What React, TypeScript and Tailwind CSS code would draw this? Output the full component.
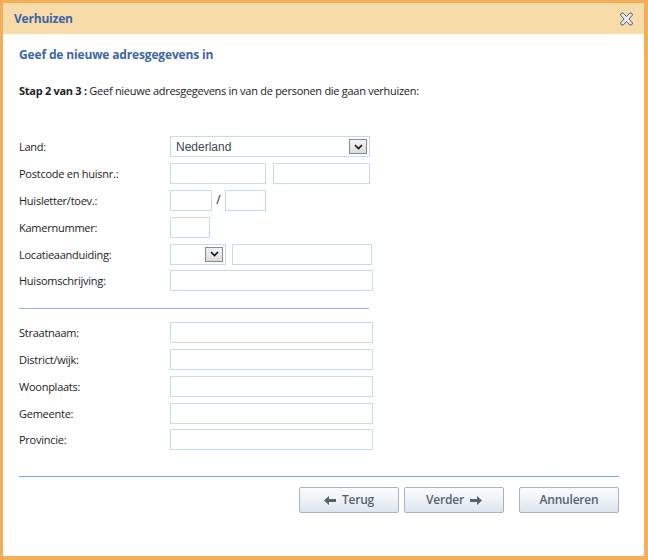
import React from "react";

const font = { fontFamily: '"Open Sans", "Noto Sans", sans-serif' };

function Input({ w }: { w: string }) {
  return <div className={`h-[21px] border border-[#c6daee] bg-white ${w}`} />;
}

function Chevron() {
  return (
    <div className="flex h-[15px] w-[18px] items-center justify-center border border-[#8a8a8a] bg-gradient-to-b from-[#f4f4f4] to-[#dcdcdc]">
      <svg width="9" height="6" viewBox="0 0 9 6">
        <path d="M1 1 L4.5 4.5 L8 1" stroke="#111" strokeWidth="1.6" fill="none" />
      </svg>
    </div>
  );
}

function Row({ label, children, h = "h-[27px]" }: { label: string; children: React.ReactNode; h?: string }) {
  return (
    <div className={`flex items-center ${h}`}>
      <div className="w-[151px] text-[11px] tracking-[-0.25px] text-[#222] leading-none">{label}</div>
      <div className="flex items-center">{children}</div>
    </div>
  );
}

function Btn({ children }: { children: React.ReactNode }) {
  return (
    <div className="flex h-[26px] w-[100px] items-center justify-center gap-[6px] rounded-[2px] border border-[#a9b3bf] bg-gradient-to-b from-[#fbfcfd] via-[#eef2f7] to-[#dde4ee] text-[12px] font-semibold tracking-[-0.2px] text-[#58626e]">
      {children}
    </div>
  );
}

function ArrowLeft() {
  return (
    <svg width="12" height="9" viewBox="0 0 12 9">
      <path d="M0 4.5 L5 0 L5 3 L12 3 L12 6 L5 6 L5 9 Z" fill="#58626e" />
    </svg>
  );
}
function ArrowRight() {
  return (
    <svg width="12" height="9" viewBox="0 0 12 9">
      <path d="M12 4.5 L7 0 L7 3 L0 3 L0 6 L7 6 L7 9 Z" fill="#58626e" />
    </svg>
  );
}

export default function App() {
  return (
    <div style={font} className="h-[560px] w-[648px] border-l-[3px] border-t-[3px] border-r-[4px] border-b-[4px] border-[#f4ae58] bg-white">
      <div className="flex h-[31px] items-center justify-between bg-[#f7dca9] pl-[11px] pr-[10px]">
        <div className="text-[12px] font-bold tracking-[-0.2px] text-[#3b67a6]">Verhuizen</div>
        <svg width="15" height="14" viewBox="0 0 15 14">
          <path
            d="M2 1.5 L4 0.8 L7.5 4.5 L11 0.8 L13 1.5 L13.5 3 L10 7 L13.5 11 L13 12.5 L11 13.2 L7.5 9.5 L4 13.2 L2 12.5 L1.5 11 L5 7 L1.5 3 Z"
            fill="#e8eaee"
            stroke="#5a6070"
            strokeWidth="1"
            strokeLinejoin="round"
          />
        </svg>
      </div>
      <div className="pl-[16px] pr-[25px]">
        <div className="pt-[12px] text-[12px] font-bold tracking-[-0.15px] text-[#3b67a6] leading-[18px]">Geef de nieuwe adresgegevens in</div>
        <div className="pt-[20px] text-[11px] tracking-[-0.28px] text-[#222] leading-[14px]">
          <span className="font-bold">Stap 2 van 3 :</span> Geef nieuwe adresgegevens in van de personen die gaan verhuizen:
        </div>
        <div className="pt-[35px]">
          <Row label="Land:">
            <div className="flex h-[21px] w-[200px] items-center justify-between border border-[#c6daee] pl-[5px] pr-[2px]">
              <span className="text-[12px] text-[#3c4652]" style={{ fontFamily: '"Liberation Sans", Arial, sans-serif' }}>Nederland</span>
              <Chevron />
            </div>
          </Row>
          <Row label="Postcode en huisnr.:">
            <Input w="w-[96px]" />
            <div className="w-[7px]" />
            <Input w="w-[97px]" />
          </Row>
          <Row label="Huisletter/toev.:" h="h-[26px]">
            <Input w="w-[42px]" />
            <div className="w-[13px] text-center text-[12px] text-[#222]">/</div>
            <Input w="w-[41px]" />
          </Row>
          <Row label="Kamernummer:" h="h-[28px]">
            <Input w="w-[40px]" />
          </Row>
          <Row label="Locatieaanduiding:" h="h-[26px]">
            <div className="flex h-[21px] w-[56px] items-center justify-end border border-[#c6daee] pr-[2px]">
              <Chevron />
            </div>
            <div className="w-[6px]" />
            <Input w="w-[140px]" />
          </Row>
          <Row label="Huisomschrijving:">
            <Input w="w-[203px]" />
          </Row>
        </div>
        <div className="mt-[14px] h-px w-[350px] bg-[#98b3d8]" />
        <div className="pt-[10px]">
          <Row label="Straatnaam:"><Input w="w-[203px]" /></Row>
          <Row label="District/wijk:"><Input w="w-[203px]" /></Row>
          <Row label="Woonplaats:"><Input w="w-[203px]" /></Row>
          <Row label="Gemeente:" h="h-[26px]"><Input w="w-[203px]" /></Row>
          <Row label="Provincie:"><Input w="w-[203px]" /></Row>
        </div>
        <div className="mt-[23px] h-px w-[600px] bg-[#6eaae4]" />
        <div className="flex justify-end pt-[10px]">
          <Btn><ArrowLeft /><span>Terug</span></Btn>
          <div className="w-[5px]" />
          <Btn><span>Verder</span><ArrowRight /></Btn>
          <div className="w-[15px]" />
          <Btn><span>Annuleren</span></Btn>
        </div>
      </div>
    </div>
  );
}
